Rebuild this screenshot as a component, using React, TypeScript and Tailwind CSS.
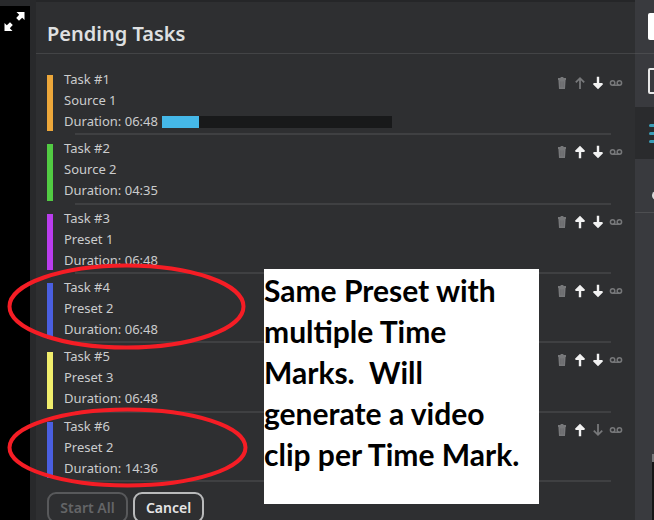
import { clsx } from 'clsx';

interface Task {
  id: number;
  source: string;
  duration: string;
  color: string;
  progress?: number;
}

const TASKS: Task[] = [
  { id: 1, source: 'Source 1', duration: '06:48', color: 'bg-[#eca73a]', progress: 16 },
  { id: 2, source: 'Source 2', duration: '04:35', color: 'bg-[#52cb43]' },
  { id: 3, source: 'Preset 1', duration: '06:48', color: 'bg-[#b93ded]' },
  { id: 4, source: 'Preset 2', duration: '06:48', color: 'bg-[#4a5fe0]' },
  { id: 5, source: 'Preset 3', duration: '06:48', color: 'bg-[#f0ed6c]' },
  { id: 6, source: 'Preset 2', duration: '14:36', color: 'bg-[#4a5fe0]' },
];

const NOTE_LINES = ['Same Preset with', 'multiple Time', 'Marks.  Will', 'generate a video', 'clip per Time Mark.'];

function TrashIcon() {
  return (
    <svg width="10" height="14" viewBox="0 0 10 14" fill="currentColor">
      <path d="M1 2h2.2L4 1h2l.8 1H9v2H1zM1.4 4h7.2l-.6 9H2z" />
      <path d="M3.9 5.4v6M6.1 5.4v6" stroke="#5c5d5f" strokeWidth=".6" />
    </svg>
  );
}

function ArrowIcon({ down }: { down?: boolean }) {
  return (
    <svg width="12" height="14" viewBox="0 0 12 14" className={clsx(down && 'rotate-180')} fill="currentColor">
      <path d="M6 .8 11 5.8 10.3 7H7.2v6.2H4.8V7H1.7L1 5.8z" />
    </svg>
  );
}

function ThinArrowIcon({ down }: { down?: boolean }) {
  return (
    <svg
      width="12"
      height="14"
      viewBox="0 0 12 14"
      className={clsx(down && 'rotate-180')}
      fill="none"
      stroke="currentColor"
      strokeWidth="1.8"
    >
      <path d="M6 13V2.4M1.8 6.4 6 2.2l4.2 4.2" />
    </svg>
  );
}

function LoopIcon() {
  return (
    <svg width="14" height="8" viewBox="0 0 14 8" fill="none" stroke="currentColor" strokeWidth="1.5">
      <circle cx="3.6" cy="4" r="2.2" />
      <circle cx="10.4" cy="4" r="2.2" />
      <path d="M3.6 6.2h6.8" />
    </svg>
  );
}

function MoveButton({ down, disabled }: { down?: boolean; disabled?: boolean }) {
  return (
    <button
      aria-label={down ? 'Move down' : 'Move up'}
      disabled={disabled}
      className={clsx('flex w-[18px] justify-center', disabled ? 'text-[#77787a]' : 'text-[#f2f2f2]')}
    >
      {disabled ? <ThinArrowIcon down={down} /> : <ArrowIcon down={down} />}
    </button>
  );
}

function TaskRow({ task, first, last }: { task: Task; first: boolean; last: boolean }) {
  return (
    <li className="flex flex-col pl-[11px]">
      <div className="flex flex-1 pt-[9px]">
        <span className={clsx('mb-[2px] w-[6px] shrink-0', task.color)} />
        <div className="-mt-[6px] ml-[11px] flex-1 text-[13px] leading-[21px] text-[#cbcccd]">
          <p>Task #{task.id}</p>
          <p>{task.source}</p>
          <div className="flex items-center gap-1">
            <p>Duration: {task.duration}</p>
            {task.progress !== undefined && (
              <div className="h-[12px] w-[47%] bg-[#18191a]">
                <div className="h-full bg-[#45b8e8]" style={{ width: `${task.progress}%` }} />
              </div>
            )}
          </div>
        </div>
        <div className="mr-[10px] flex h-4 items-center text-[#77787a]">
          <button aria-label="Delete" className="flex w-[18px] justify-center">
            <TrashIcon />
          </button>
          <MoveButton disabled={first} />
          <MoveButton down disabled={last} />
          <button aria-label="Loop" className="flex w-[18px] justify-center">
            <LoopIcon />
          </button>
        </div>
      </div>
      <div className="mr-6 ml-7 h-[2px] bg-[#3f4042]" />
    </li>
  );
}

function SideRail() {
  return (
    <nav className="flex w-[19px] shrink-0 flex-col overflow-hidden bg-[#393a3e]">
      <button aria-label="Media" className="flex h-[54px] items-center border-b border-[#4a4b4e] pl-[13px]">
        <span className="h-[27px] w-6 shrink-0 rounded-l-xs bg-white" />
      </button>
      <button aria-label="Layout" className="flex h-[53px] items-center pl-[13px]">
        <span className="h-[26px] w-6 shrink-0 rounded-l-xs border-2 border-[#e8e8e8]" />
      </button>
      <button aria-label="Tasks" className="flex h-[52px] flex-col justify-center gap-[5px] bg-[#2a2b2d] pl-[14px]">
        <span className="h-[3px] w-5 shrink-0 rounded-full bg-[#3c9fb9]" />
        <span className="h-[3px] w-5 shrink-0 rounded-full bg-[#3c9fb9]" />
        <span className="h-[3px] w-5 shrink-0 rounded-full bg-[#3c9fb9]" />
      </button>
      <button aria-label="Account" className="flex h-[54px] items-end border-b border-[#4d4e51] pb-3 pl-[17px]">
        <span className="h-[9px] w-4 shrink-0 rounded-l-full bg-[#d8d8d8]" />
      </button>
      <div className="flex flex-1 items-end pl-[17px]">
        <span className="h-[66px] w-4 shrink-0 border-t-8 border-[#77787a] bg-[#151516]" />
      </div>
    </nav>
  );
}

export default function App() {
  return (
    <div className="relative flex h-screen overflow-hidden bg-[#28292b] font-['Noto_Sans','Open_Sans',sans-serif]">
      <aside className="mt-[6px] w-[30px] shrink-0 bg-black pt-[5px] pl-[3px]">
        <button aria-label="Expand" className="block text-white">
          <svg width="23" height="22" viewBox="0 0 23 22" fill="currentColor">
            <path d="M13.500 1H21.500V9L19.200 6.700 16 9.700 13.200 7 16.200 3.700z" />
            <path d="M9.500 20H1.500V12L3.800 14.300 7 11.300 9.800 14 6.800 17.300z" />
          </svg>
        </button>
      </aside>

      <main className="ml-[6px] flex min-w-0 flex-1 flex-col border-t-2 border-[#252628] bg-[#2e2f31]">
        <header className="flex h-[52px] shrink-0 items-end border-b border-[#434446] pb-[6px] pl-[11px]">
          <h1 className="text-[20px] leading-[26px] font-semibold text-[#dfe0e1]">Pending Tasks</h1>
        </header>
        <ul className="mt-3 grid min-h-[416px] shrink-0 auto-rows-fr">
          {TASKS.map((task, i) => (
            <TaskRow key={task.id} task={task} first={i === 0} last={i === TASKS.length - 1} />
          ))}
        </ul>
        <footer className="mt-[10px] flex gap-[5px] pl-[11px] text-[14px] font-semibold">
          <button
            disabled
            className="h-[31px] w-[81px] shrink-0 rounded-[9px] border-2 border-[#58595b] text-[#646567]"
          >
            Start All
          </button>
          <button className="h-[31px] w-[71px] shrink-0 rounded-[9px] border-2 border-[#b9babb] text-[#e6e6e6]">
            Cancel
          </button>
        </footer>
      </main>

      <SideRail />

      <svg className="pointer-events-none absolute top-0 left-0" width="260" height="520" fill="none">
        <ellipse cx="126.500" cy="306.500" rx="117" ry="41" stroke="#f51d25" strokeWidth="4" />
        <ellipse cx="127.500" cy="447.500" rx="118" ry="38" stroke="#f51d25" strokeWidth="4" />
      </svg>

      <p className="absolute top-[269px] left-[264px] h-[235px] w-[275px] bg-white pt-px font-['Lato',sans-serif] text-[30px] leading-[41px] font-bold whitespace-pre text-black">
        {NOTE_LINES.join('\n')}
      </p>
    </div>
  );
}
